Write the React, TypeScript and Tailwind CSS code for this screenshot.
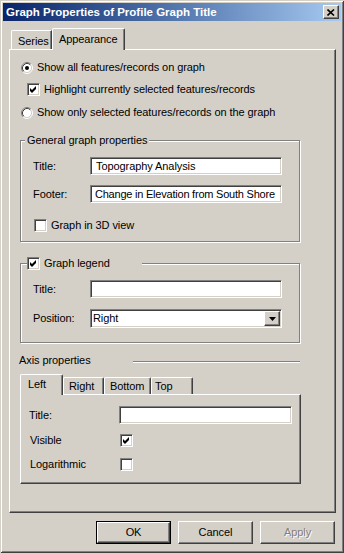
import React from "react";

const sunken =
  "border border-t-[#808080] border-l-[#808080] border-b-white border-r-white shadow-[inset_1px_1px_0_#404040,inset_-1px_-1px_0_#d4d0c8]";
const raised =
  "border border-t-white border-l-white border-b-[#404040] border-r-[#404040] shadow-[inset_-1px_-1px_0_#808080]";
const etched =
  "border border-[#808080] shadow-[1px_1px_0_#ffffff,inset_1px_1px_0_#ffffff]";

function Radio({ checked }: { checked?: boolean }) {
  return (
    <svg width="12" height="12" viewBox="0 0 12 12" className="shrink-0">
      <circle cx="6" cy="6" r="4.5" fill="#ffffff" />
      <path d="M2.11 9.89 A5.5 5.5 0 0 1 9.89 2.11" fill="none" stroke="#808080" strokeWidth="1" />
      <path d="M9.89 2.11 A5.5 5.5 0 0 1 2.11 9.89" fill="none" stroke="#ffffff" strokeWidth="1" />
      <path d="M2.82 9.18 A4.5 4.5 0 0 1 9.18 2.82" fill="none" stroke="#404040" strokeWidth="1" />
      <path d="M9.18 2.82 A4.5 4.5 0 0 1 2.82 9.18" fill="none" stroke="#d4d0c8" strokeWidth="1" />
      {checked && <circle cx="6" cy="6" r="2" fill="#000000" />}
    </svg>
  );
}

function Check({ checked }: { checked?: boolean }) {
  return (
    <div className={`w-[13px] h-[13px] shrink-0 bg-white flex items-center justify-center ${sunken}`}>
      {checked && (
        <svg width="7" height="7" viewBox="0 0 7 7">
          <path d="M0 2 L2 4 L6 0 L6 3 L2 7 L0 5 Z" fill="#000000" />
        </svg>
      )}
    </div>
  );
}

function TextBox({ value, w, extra = "" }: { value?: string; w: string; extra?: string }) {
  return (
    <div className={`h-[18px] ${w} bg-white flex items-center pl-[5px] whitespace-nowrap overflow-hidden ${sunken} ${extra}`}>
      {value}
    </div>
  );
}

export default function App() {
  return (
    <div className="w-[344px] h-[553px] bg-[#d4d0c8] text-black text-[11px] leading-[13px] tracking-[-0.08px] font-['Liberation_Sans',Arial,sans-serif] shadow-[inset_1px_1px_0_#d4d0c8,inset_-1px_-1px_0_#404040,inset_2px_2px_0_#ffffff,inset_-2px_-2px_0_#808080] pt-[3px] overflow-hidden select-none">
      {/* Title bar */}
      <div className="mx-[3px] h-[18px] flex items-center justify-between bg-gradient-to-r from-[#0a246a] to-[#a6caf0]">
        <span className="pl-[3px] text-white font-bold text-[11.5px] tracking-normal whitespace-nowrap">
          Graph Properties of Profile Graph Title
        </span>
        <div className={`mr-[2px] w-[16px] h-[14px] bg-[#d4d0c8] flex items-center justify-center ${raised}`}>
          <svg width="8" height="7" viewBox="0 0 8 7">
            <path d="M0.5 0.5 L7 6.5 M7 0.5 L0.5 6.5" stroke="#000" strokeWidth="1.6" />
          </svg>
        </div>
      </div>

      {/* Tabs */}
      <div className="mt-[7px] ml-[9px] h-[21px] flex items-end">
        <div className="ml-[2px] w-[41px] h-[19px] pl-[6px] pt-[4px] border-t border-l border-white border-r border-r-[#404040] shadow-[inset_-1px_0_0_#808080] rounded-tl-[2px]">
          Series
        </div>
        <div className="relative z-10 -mb-px w-[73px] h-[22px] pl-[6px] pt-[4px] bg-[#d4d0c8] border-t border-l border-white border-r border-r-[#404040] shadow-[inset_-1px_0_0_#808080] rounded-t-[2px]">
          Appearance
        </div>
      </div>

      {/* Main panel */}
      <div className="ml-[9px] w-[327px] h-[464px] border-t border-l border-white border-r border-b border-r-[#404040] border-b-[#404040] shadow-[inset_-1px_-1px_0_#808080] flex flex-col">
        <div className="mt-[11px] ml-[11px] h-[13px] flex items-center gap-[4px]">
          <Radio checked />
          <span>Show all features/records on graph</span>
        </div>
        <div className="mt-[9px] ml-[17px] h-[13px] flex items-center gap-[4px]">
          <Check checked />
          <span>Highlight currently selected features/records</span>
        </div>
        <div className="mt-[10px] ml-[11px] h-[13px] flex items-center gap-[4px]">
          <Radio />
          <span>Show only selected features/records on the graph</span>
        </div>

        {/* General graph properties */}
        <div className={`relative mt-[21px] ml-[10px] w-[280px] h-[102px] flex flex-col ${etched}`}>
          <span className="absolute -top-[7px] left-[4px] px-[2px] bg-[#d4d0c8] whitespace-nowrap">
            General graph properties
          </span>
          <div className="mt-[16px] flex items-center">
            <span className="pl-[12px] w-[69px]">Title:</span>
            <TextBox value="Topography Analysis" w="w-[192px]" />
          </div>
          <div className="mt-[10px] flex items-center">
            <span className="pl-[12px] w-[69px]">Footer:</span>
            <TextBox value="Change in Elevation from South Shore" w="w-[192px]" extra="tracking-[-0.22px] !pl-[4px]" />
          </div>
          <div className="mt-[16px] ml-[13px] h-[13px] flex items-center gap-[4px]">
            <Check />
            <span>Graph in 3D view</span>
          </div>
        </div>

        {/* Graph legend */}
        <div className={`relative mt-[21px] ml-[10px] w-[280px] h-[80px] flex flex-col ${etched}`}>
          <div className="absolute -top-[7px] left-[6px] w-[115px] h-[13px] bg-[#d4d0c8] flex items-center gap-[4px]">
            <Check checked />
            <span>Graph legend</span>
          </div>
          <div className="mt-[16px] flex items-center">
            <span className="pl-[12px] w-[69px]">Title:</span>
            <TextBox w="w-[192px]" />
          </div>
          <div className="mt-[11px] flex items-center">
            <span className="pl-[12px] w-[69px]">Position:</span>
            <div className={`h-[19px] w-[192px] bg-white flex items-center ${sunken}`}>
              <span className="pl-[2px] flex-1">Right</span>
              <div className={`mr-[1px] w-[16px] h-[15px] bg-[#d4d0c8] flex items-center justify-center ${raised}`}>
                <svg width="7" height="4" viewBox="0 0 7 4">
                  <path d="M0 0 L7 0 L3.5 4 Z" fill="#000" />
                </svg>
              </div>
            </div>
          </div>
        </div>

        {/* Axis properties heading */}
        <div className="mt-[11px] ml-[9px] w-[281px] h-[13px] flex items-center">
          <span className="w-[114px]">Axis properties</span>
          <div className="flex-1 h-[2px] mt-[2px] border-t border-[#808080] border-b border-b-white" />
        </div>

        {/* Axis tabs */}
        <div className="mt-[7px] ml-[10px] h-[20px] flex items-end">
          <div className="relative z-10 -mb-px w-[43px] h-[21px] pl-[7px] pt-[3px] bg-[#d4d0c8] border-t border-l border-white border-r border-r-[#404040] shadow-[inset_-1px_0_0_#808080] rounded-t-[2px]">
            Left
          </div>
          <div className="w-[41px] h-[17px] pl-[5px] pt-[2px] border-t border-l border-white border-r border-r-[#404040] shadow-[inset_-1px_0_0_#808080] rounded-t-[2px]">
            Right
          </div>
          <div className="w-[47px] h-[17px] pl-[5px] pt-[2px] border-t border-l border-white border-r border-r-[#404040] shadow-[inset_-1px_0_0_#808080] rounded-t-[2px]">
            Bottom
          </div>
          <div className="w-[42px] h-[17px] pl-[3px] pt-[2px] border-t border-l border-white border-r border-r-[#404040] shadow-[inset_-1px_0_0_#808080] rounded-t-[2px]">
            Top
          </div>
        </div>

        {/* Axis panel */}
        <div className="ml-[10px] w-[281px] h-[90px] border-t border-l border-white border-r border-b border-r-[#404040] border-b-[#404040] shadow-[inset_-1px_-1px_0_#808080] flex flex-col">
          <div className="mt-[11px] flex items-center">
            <span className="pl-[8px] w-[98px]">Title:</span>
            <TextBox w="w-[173px]" />
          </div>
          <div className="mt-[10px] h-[13px] flex items-center">
            <span className="pl-[9px] w-[99px]">Visible</span>
            <Check checked />
          </div>
          <div className="mt-[11px] h-[13px] flex items-center">
            <span className="pl-[9px] w-[99px]">Logarithmic</span>
            <Check />
          </div>
        </div>
      </div>

      {/* Buttons */}
      <div className="mt-[8px] flex h-[23px]">
        <div className="ml-[96px] w-[75px] h-[23px] border border-black">
          <div className={`w-full h-full flex items-center justify-center ${raised}`}>OK</div>
        </div>
        <div className={`ml-[7px] w-[75px] h-[23px] flex items-center justify-center ${raised}`}>Cancel</div>
        <div className={`ml-[7px] w-[75px] h-[23px] flex items-center justify-center text-[#808080] [text-shadow:1px_1px_0_#ffffff] ${raised}`}>
          Apply
        </div>
      </div>
    </div>
  );
}
